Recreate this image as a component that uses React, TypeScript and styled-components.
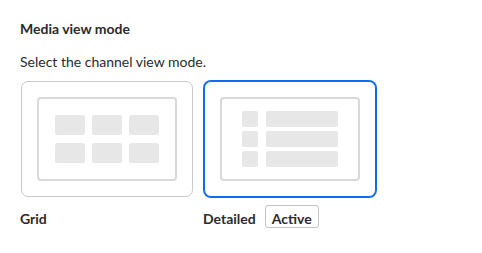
import React from "react";
import styled, { createGlobalStyle } from "styled-components";

const GlobalStyle = createGlobalStyle`
  html, body { margin: 0; padding: 0; background: #ffffff; }
  body { font-family: Lato, "Noto Sans", "Liberation Sans", sans-serif; color: #2b2b2b; }
`;

const Page = styled.div`
  padding: 20px 20px 20px 20px;
`;

const Title = styled.h3`
  margin: 0;
  font-size: 14px;
  font-weight: 700;
  line-height: 17px;
  color: #2b2b2b;
`;

const Description = styled.p`
  margin: 16px 0 0 0;
  font-size: 14px;
  font-weight: 400;
  line-height: 17px;
  color: #2b2b2b;
`;

const Options = styled.div`
  display: flex;
  gap: 10px;
  margin-top: 9px;
`;

const Option = styled.div`
  display: flex;
  flex-direction: column;
  width: 173px;
`;

const Card = styled.button<{ $selected?: boolean }>`
  box-sizing: border-box;
  width: 172px;
  height: 116px;
  margin: 2px 0 0 1px;
  padding: 15px;
  border: 1px solid ${(p) => (p.$selected ? "#0b6cf2" : "#c9c9c9")};
  border-radius: 7px;
  background: #ffffff;
  box-shadow: ${(p) => (p.$selected ? "0 0 0 1px #0b6cf2" : "none")};
  cursor: pointer;
  display: flex;
`;

const Frame = styled.div`
  box-sizing: border-box;
  width: 140px;
  height: 84px;
  border: 2px solid #d9d9d9;
  border-radius: 4px;
  display: flex;
  align-items: center;
  justify-content: center;
`;

const TileGrid = styled.div`
  display: grid;
  grid-template-columns: repeat(3, 30px);
  grid-template-rows: repeat(2, 20px);
  column-gap: 7px;
  row-gap: 8px;
`;

const Tile = styled.div`
  background: #e7e7e7;
  border-radius: 2px;
`;

const ListRows = styled.div`
  display: grid;
  grid-template-columns: 16px 72px;
  grid-auto-rows: 16px;
  column-gap: 8px;
  row-gap: 4px;
`;

const LabelRow = styled.div`
  display: flex;
  align-items: center;
  gap: 9px;
  height: 23px;
  margin-top: 8px;
`;

const Label = styled.span`
  padding-top: 3px;
  font-size: 14px;
  font-weight: 700;
  color: #2b2b2b;
`;

const Badge = styled.span`
  box-sizing: border-box;
  height: 23px;
  padding: 3px 6px 0 6px;
  display: inline-flex;
  align-items: center;
  border: 1px solid #c4c4c4;
  border-radius: 3px;
  font-size: 14px;
  font-weight: 700;
  color: #2b2b2b;
`;

export default function App() {
  return (
    <>
      <GlobalStyle />
      <Page>
        <Title>Media view mode</Title>
        <Description>Select the channel view mode.</Description>
        <Options>
          <Option>
            <Card aria-label="Grid">
              <Frame>
                <TileGrid>
                  {Array.from({ length: 6 }).map((_, i) => (
                    <Tile key={i} />
                  ))}
                </TileGrid>
              </Frame>
            </Card>
            <LabelRow>
              <Label>Grid</Label>
            </LabelRow>
          </Option>
          <Option>
            <Card $selected aria-label="Detailed">
              <Frame>
                <ListRows>
                  {Array.from({ length: 6 }).map((_, i) => (
                    <Tile key={i} />
                  ))}
                </ListRows>
              </Frame>
            </Card>
            <LabelRow>
              <Label>Detailed</Label>
              <Badge>Active</Badge>
            </LabelRow>
          </Option>
        </Options>
      </Page>
    </>
  );
}
